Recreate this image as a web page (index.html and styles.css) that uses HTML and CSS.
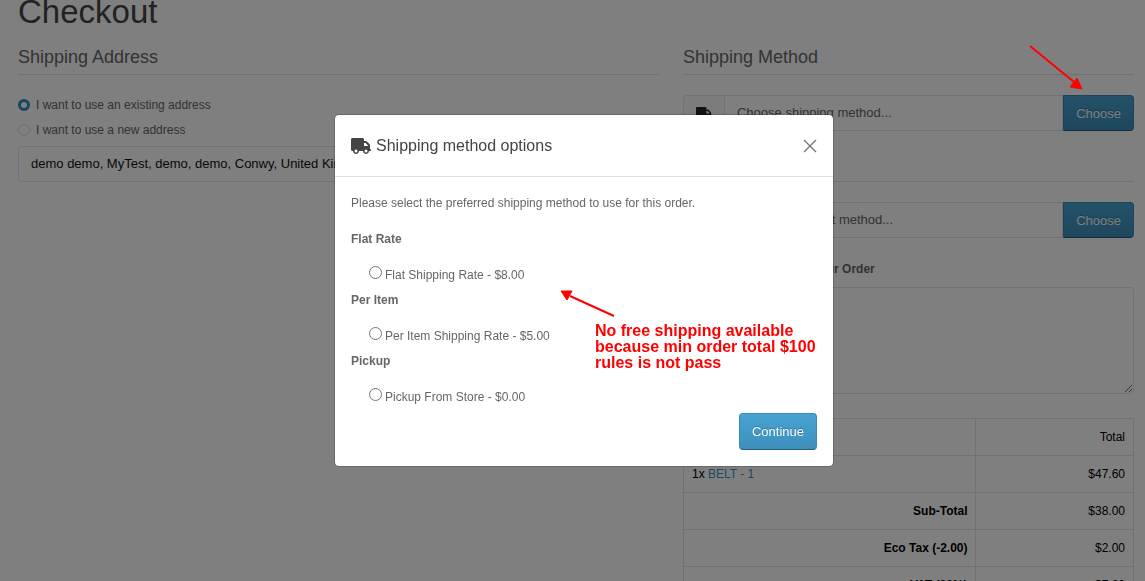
FILE: index.html
```html
<!DOCTYPE html>
<html lang="en">
<head>
    <meta charset="UTF-8">
    <meta name="viewport" content="width=device-width, initial-scale=1.0">
    <title>Checkout</title>
    <link rel="stylesheet" href="styles.css">
</head>
<body>
    <main class="container">
        <h1>Checkout</h1>
        <div class="row">
            <div class="col-left">
                <h2 class="legend">Shipping Address</h2>
                <form class="address">
                    <div class="check">
                        <input type="radio" name="address" id="address-existing" checked>
                        <label for="address-existing">I want to use an existing address</label>
                    </div>
                    <div class="check">
                        <input type="radio" name="address" id="address-new">
                        <label for="address-new">I want to use a new address</label>
                    </div>
                    <select class="form-control" aria-label="Address">
                        <option>demo demo, MyTest, demo, demo, Conwy, United Kingdom</option>
                    </select>
                </form>
            </div>
            <div class="col-right">
                <h2 class="legend">Shipping Method</h2>
                <div class="input-group">
                    <span class="addon">
                        <svg class="icon" viewBox="0 0 640 512"><use href="#truck"/></svg>
                    </span>
                    <input type="text" class="form-control" value="Choose shipping method..." aria-label="Shipping method" readonly>
                    <button type="button" class="btn">Choose</button>
                </div>
                <h2 class="legend">Payment Method</h2>
                <div class="input-group">
                    <span class="addon">
                        <svg class="icon" viewBox="0 0 640 512"><path d="M96 64h448q32 0 32 32v32H64V96q0-32 32-32zM64 208h512v208q0 32-32 32H96q-32 0-32-32z"/></svg>
                    </span>
                    <input type="text" class="form-control" value="Choose payment method..." aria-label="Payment method" readonly>
                    <button type="button" class="btn">Choose</button>
                </div>
                <label class="comment-label" for="comment">Add Comments About Your Order</label>
                <textarea class="form-control" id="comment"></textarea>
                <table class="totals">
                    <thead>
                        <tr><th>Product Name</th><th class="amount">Total</th></tr>
                    </thead>
                    <tbody>
                        <tr><td>1x <a href="#">BELT - 1</a></td><td class="amount">$47.60</td></tr>
                        <tr><td class="name">Sub-Total</td><td class="amount">$38.00</td></tr>
                        <tr><td class="name">Eco Tax (-2.00)</td><td class="amount">$2.00</td></tr>
                        <tr><td class="name">VAT (20%)</td><td class="amount">$7.60</td></tr>
                    </tbody>
                </table>
            </div>
        </div>
    </main>

    <div class="backdrop"></div>
    <div class="modal" role="dialog" aria-labelledby="modal-title">
        <div class="modal-content">
            <div class="modal-header">
                <h5 id="modal-title">
                    <svg class="icon" viewBox="0 0 640 512">
                        <path id="truck" fill-rule="evenodd" d="M48 0C21.500 0 0 21.500 0 48v320c0 26.500 21.500 48 48 48h16c0 53 43 96 96 96s96-43 96-96h128c0 53 43 96 96 96s96-43 96-96h32c17.700 0 32-14.300 32-32s-14.300-32-32-32V237.300c0-17-6.700-33.300-18.700-45.300L512 114.700c-12-12-28.300-18.700-45.300-18.700H416V48c0-26.500-21.500-48-48-48H48zM416 160h50.700L544 237.300V256H416v-96zM112 416a48 48 0 1 1 96 0 48 48 0 1 1-96 0zm368-48a48 48 0 1 1 0 96 48 48 0 1 1 0-96z"/>
                    </svg>
                    Shipping method options
                </h5>
                <button type="button" class="btn-close" aria-label="Close">
                    <svg viewBox="0 0 14 14"><path d="M1 1l12 12M13 1L1 13"/></svg>
                </button>
            </div>
            <form class="modal-body">
                <p>Please select the preferred shipping method to use for this order.</p>
                <p><strong>Flat Rate</strong></p>
                <div class="option">
                    <input type="radio" name="shipping" id="flat">
                    <label for="flat">Flat Shipping Rate - $8.00</label>
                </div>
                <p><strong>Per Item</strong></p>
                <div class="option">
                    <input type="radio" name="shipping" id="item">
                    <label for="item">Per Item Shipping Rate - $5.00</label>
                </div>
                <p><strong>Pickup</strong></p>
                <div class="option">
                    <input type="radio" name="shipping" id="pickup">
                    <label for="pickup">Pickup From Store - $0.00</label>
                </div>
                <div class="buttons">
                    <button type="button" class="btn">Continue</button>
                </div>
            </form>
        </div>
    </div>

    <!-- notes drawn over the page -->
    <svg class="arrow arrow-choose" viewBox="0 0 54 46">
        <path d="M1 1l44 36"/>
        <polygon points="53,44 41,42 48,33"/>
    </svg>
    <svg class="arrow arrow-options" viewBox="0 0 56 28">
        <path d="M54 26L10 6"/>
        <polygon points="1,1 12,1 7,10"/>
    </svg>
    <p class="note">No free shipping available because min order total $100 rules is not pass</p>
</body>
</html>
```
FILE: styles.css
```css
* {
    box-sizing: border-box;
}
html {
    height: 100%;
    overflow: hidden;
}
body {
    margin: 0;
    font-family: "Liberation Sans", Arial, sans-serif;
    font-size: 12px;
    line-height: 20px;
    color: #666;
    background-color: #fff;
}
.container {
    padding: 0 11px 0 18px;
}
h1 {
    margin: 0 0 22px;
    font-size: 33px;
    font-weight: 400;
    line-height: 24px;
    color: #444;
}
.row {
    display: flex;
    margin: 0 -12px;
}
.col-left {
    width: 58.333%;
    padding: 0 12px;
}
.col-right {
    width: 41.667%;
    padding: 0 12px;
}
.legend {
    margin: 0 0 20px;
    padding-bottom: 6px;
    font-size: 18px;
    font-weight: 400;
    line-height: 22px;
    border-bottom: 1px solid #dee2e6;
}
.check {
    display: flex;
    align-items: center;
    gap: 6px;
    margin-bottom: 5px;
}
.check input {
    appearance: none;
    width: 12px;
    height: 12px;
    margin: 0;
    border: 1px solid #dee2e6;
    border-radius: 50%;
}
.check input:checked {
    border: 3px solid #2d8fbf;
}
.form-control {
    display: block;
    width: 100%;
    height: 36px;
    margin: 0;
    padding: 0 12px 2px;
    font-family: inherit;
    font-size: 13px;
    color: #666;
    background-color: #fff;
    border: 1px solid #dee2e6;
    border-radius: 4px;
}
select.form-control {
    appearance: none;
    margin-top: 6px;
    color: #111;
}
textarea.form-control {
    height: 107px;
    margin-bottom: 24px;
}
.input-group {
    display: flex;
    height: 36px;
    margin-bottom: 22px;
}
.input-group .form-control {
    flex: 1;
    min-width: 0;
    border-radius: 0;
}
.addon {
    display: flex;
    align-items: center;
    padding: 0 12px;
    color: #212529;
    background-color: #f8f9fa;
    border: 1px solid #dee2e6;
    border-right: 0;
    border-radius: 4px 0 0 4px;
}
.addon .icon {
    width: 16px;
    height: 13px;
}
.icon {
    fill: currentColor;
}
.btn {
    padding: 8px 12px;
    font-family: inherit;
    font-size: 13px;
    line-height: 19px;
    color: #fff;
    text-shadow: 0 -1px 0 rgba(0,0,0,0.25);
    background: linear-gradient(#47a3d3, #3e8fba);
    border: 1px solid #3b8ab5;
    border-bottom-color: #1f5f80;
    border-radius: 4px;
    cursor: pointer;
}
.input-group .btn {
    padding: 7px 12px;
    border-radius: 0 4px 4px 0;
}
.comment-label {
    display: block;
    margin-bottom: 8px;
    font-weight: bold;
    line-height: 19px;
}
.totals {
    width: 100%;
    border-collapse: collapse;
    color: #000;
}
.totals th,
.totals td {
    padding: 8px;
    font-weight: 400;
    text-align: left;
    border: 1px solid #dee2e6;
}
.totals .amount {
    width: 35%;
    text-align: right;
}
.totals .name {
    font-weight: bold;
    text-align: right;
}
.totals a {
    color: #3a94bd;
    text-decoration: none;
}
.backdrop {
    position: fixed;
    inset: 0;
    background-color: rgba(0,0,0,0.5);
}
.modal {
    position: fixed;
    inset: 0;
    display: flex;
    justify-content: center;
    align-items: flex-start;
    padding: 114px 0 0 23px;
}
.modal-content {
    width: 500px;
    background-color: #fff;
    background-clip: padding-box;
    border: 1px solid rgba(0,0,0,0.175);
    border-radius: 5px;
}
.modal-header {
    display: flex;
    align-items: center;
    justify-content: space-between;
    padding: 16px;
    border-bottom: 1px solid #dee2e6;
}
.modal-header h5 {
    display: flex;
    align-items: center;
    gap: 5px;
    margin: 0;
    font-size: 16px;
    font-weight: 400;
    line-height: 29px;
    color: #444;
}
.modal-header .icon {
    width: 20px;
    height: 16px;
}
.btn-close {
    padding: 0;
    background: none;
    border: 0;
    cursor: pointer;
}
.btn-close svg {
    display: block;
    width: 14px;
    height: 14px;
    stroke: #777;
    stroke-width: 1.4;
}
.modal-body {
    padding: 16px;
}
.modal-body p {
    margin: 0 0 16px;
}
.option {
    display: flex;
    align-items: flex-start;
    gap: 3px;
    margin-bottom: 5px;
    padding-left: 18px;
}
.option input {
    width: 13px;
    height: 13px;
    margin: 1px 0 0;
}
.buttons {
    display: flex;
    justify-content: flex-end;
    padding-top: 1px;
}
.arrow {
    position: absolute;
    fill: red;
    stroke: red;
}
.arrow path {
    stroke-width: 2;
}
.arrow polygon {
    stroke-width: 1;
}
.arrow-choose {
    top: 45px;
    left: 1029px;
    width: 54px;
    height: 46px;
}
.arrow-options {
    top: 290px;
    left: 560px;
    width: 56px;
    height: 28px;
}
.note {
    position: absolute;
    top: 323px;
    left: 595px;
    width: 230px;
    margin: 0;
    font-size: 16px;
    font-weight: bold;
    line-height: 16px;
    color: red;
}
```
